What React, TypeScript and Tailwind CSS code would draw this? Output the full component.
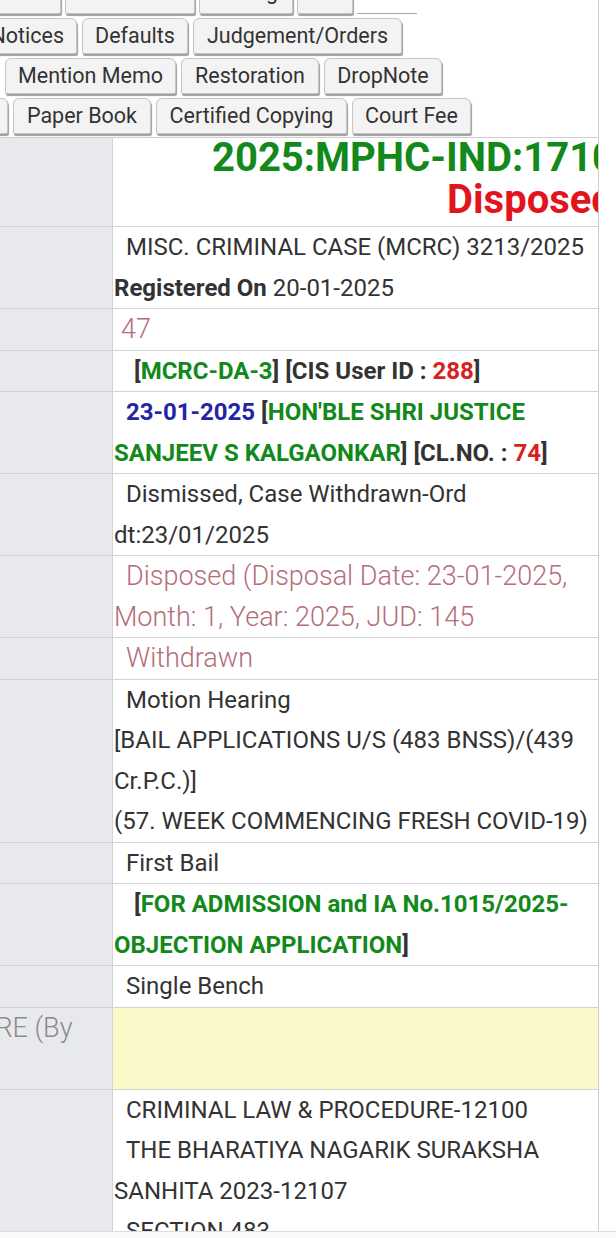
import type { ReactNode } from 'react';

const green = 'text-[#12891a]';
const red = 'text-[#d81f22]';
const pink = 'text-[27px] font-light text-[#b46e7a]';

function Tab({ children, className = '' }: { children?: ReactNode; className?: string }) {
  return (
    <div
      className={`flex h-[36px] shrink-0 items-center whitespace-nowrap rounded-t-[6px] rounded-b-[2px] border border-[#c4c4c4] bg-[#f3f3f3] text-[21.5px] text-[#333] shadow-[1px_2px_1px_#9e9e9e] ${className}`}
    >
      {children}
    </div>
  );
}

function Row({ label, children, yellow = false }: { label?: ReactNode; children?: ReactNode; yellow?: boolean }) {
  return (
    <div className="flex border-b border-[#d3d3d3]">
      <div className="w-[113px] shrink-0 overflow-hidden border-r border-[#d3d3d3] bg-[#e8e9ec]">{label}</div>
      <div
        className={`min-w-0 flex-1 pl-[1px] text-[24px] leading-[40.5px] text-[#333] ${yellow ? 'bg-[#fbf8c9]' : 'bg-white'}`}
      >
        {children}
      </div>
    </div>
  );
}

export default function App() {
  return (
    <div className="flex h-[1238px] w-[616px] flex-col overflow-hidden bg-white font-['Roboto',sans-serif]">
      {/* tab strip, scrolled so that only part of it shows */}
      <div className="h-[137px] w-[599px] shrink-0 overflow-hidden border-r border-[#cfcfcf]">
        <div className="-mt-[22px] flex flex-col gap-[4px]">
          <div className="-ml-[29px] flex gap-[4px]">
            <Tab className="w-[90px]" />
            <Tab className="w-[130px]" />
            <Tab className="w-[94px] justify-center pb-[8px]">Listing</Tab>
            <Tab className="w-[56px]" />
            <div className="h-[36px] w-[60px] shrink-0 border-b border-[#a8a8a8]" />
          </div>
          <div className="-ml-[24px] flex gap-[5px]">
            <Tab className="w-[101px] justify-end pr-[12px]">Notices</Tab>
            <Tab className="w-[106px] justify-center">Defaults</Tab>
            <Tab className="w-[209px] justify-center">Judgement/Orders</Tab>
          </div>
          <div className="ml-[5px] flex gap-[5px]">
            <Tab className="w-[171px] justify-center">Mention Memo</Tab>
            <Tab className="w-[138px] justify-center">Restoration</Tab>
            <Tab className="w-[118px] justify-center">DropNote</Tab>
          </div>
          <div className="-ml-[53px] flex gap-[5px]">
            <Tab className="w-[61px]" />
            <Tab className="w-[138px] justify-center">Paper Book</Tab>
            <Tab className="w-[191px] justify-center">Certified Copying</Tab>
            <Tab className="w-[119px] justify-center">Court Fee</Tab>
          </div>
        </div>
      </div>

      {/* case details table */}
      <div className="min-h-0 w-[599px] flex-1 overflow-hidden border-r border-t border-[#cfcfcf]">
        <div className="flex border-b border-[#d3d3d3]">
          <div className="w-[113px] shrink-0 border-r border-[#d3d3d3] bg-[#e8e9ec]" />
          <div className="min-w-0 flex-1 overflow-hidden whitespace-nowrap bg-white pb-[4px] text-[40px] font-bold">
            <div className={`pl-[99px] leading-[40px] ${green}`}>2025:MPHC-IND:17100</div>
            <div className="pl-[334px] leading-[44px] text-[#e3141c]">Disposed</div>
          </div>
        </div>

        <Row>
          <div className="indent-[12px]">MISC. CRIMINAL CASE (MCRC) 3213/2025</div>
          <div>
            <span className="font-bold">Registered On</span> 20-01-2025
          </div>
        </Row>

        <Row>
          <div className={`indent-[7px] ${pink}`}>47</div>
        </Row>

        <Row>
          <div className="indent-[20px] font-bold">
            [<span className={green}>MCRC-DA-3</span>] [CIS User ID : <span className={red}>288</span>]
          </div>
        </Row>

        <Row>
          <div className="indent-[12px] font-bold">
            <span className="text-[#2424a6]">23-01-2025</span> [<span className={green}>HON'BLE SHRI JUSTICE</span>
            <br />
            <span className={green}>SANJEEV S KALGAONKAR</span>] [CL.NO. : <span className={red}>74</span>]
          </div>
        </Row>

        <Row>
          <div className="indent-[12px]">
            Dismissed, Case Withdrawn-Ord
            <br />
            dt:23/01/2025
          </div>
        </Row>

        <Row>
          <div className={`indent-[12px] ${pink}`}>
            Disposed (Disposal Date: 23-01-2025,
            <br />
            Month: 1, Year: 2025, JUD: 145
          </div>
        </Row>

        <Row>
          <div className={`indent-[12px] ${pink}`}>Withdrawn</div>
        </Row>

        <Row>
          <div className="indent-[12px]">Motion Hearing</div>
          <div>
            [BAIL APPLICATIONS U/S (483 BNSS)/(439
            <br />
            Cr.P.C.)]
          </div>
          <div>(57. WEEK COMMENCING FRESH COVID-19)</div>
        </Row>

        <Row>
          <div className="indent-[12px]">First Bail</div>
        </Row>

        <Row>
          <div className="indent-[20px] font-bold">
            [<span className={green}>FOR ADMISSION and IA No.1015/2025-</span>
            <br />
            <span className={green}>OBJECTION APPLICATION</span>]
          </div>
        </Row>

        <Row>
          <div className="indent-[12px]">Single Bench</div>
        </Row>

        <Row
          yellow
          label={
            <div className="-ml-[70px] whitespace-nowrap text-[27px] font-light leading-[40.5px] text-[#8b8b8b]">
              BEFORE (By
            </div>
          }
        >
          <div>&nbsp;</div>
          <div>&nbsp;</div>
        </Row>

        <Row>
          <div className="indent-[12px]">CRIMINAL LAW &amp; PROCEDURE-12100</div>
          <div className="indent-[12px]">
            THE BHARATIYA NAGARIK SURAKSHA
            <br />
            SANHITA 2023-12107
          </div>
          <div className="indent-[12px]">SECTION 483</div>
          <div className="indent-[12px]">&nbsp;</div>
        </Row>
      </div>

      {/* bottom edge of the viewport */}
      <div className="h-[7px] shrink-0 border-t border-[#dcdcdc] bg-[#fafafa]" />
    </div>
  );
}
